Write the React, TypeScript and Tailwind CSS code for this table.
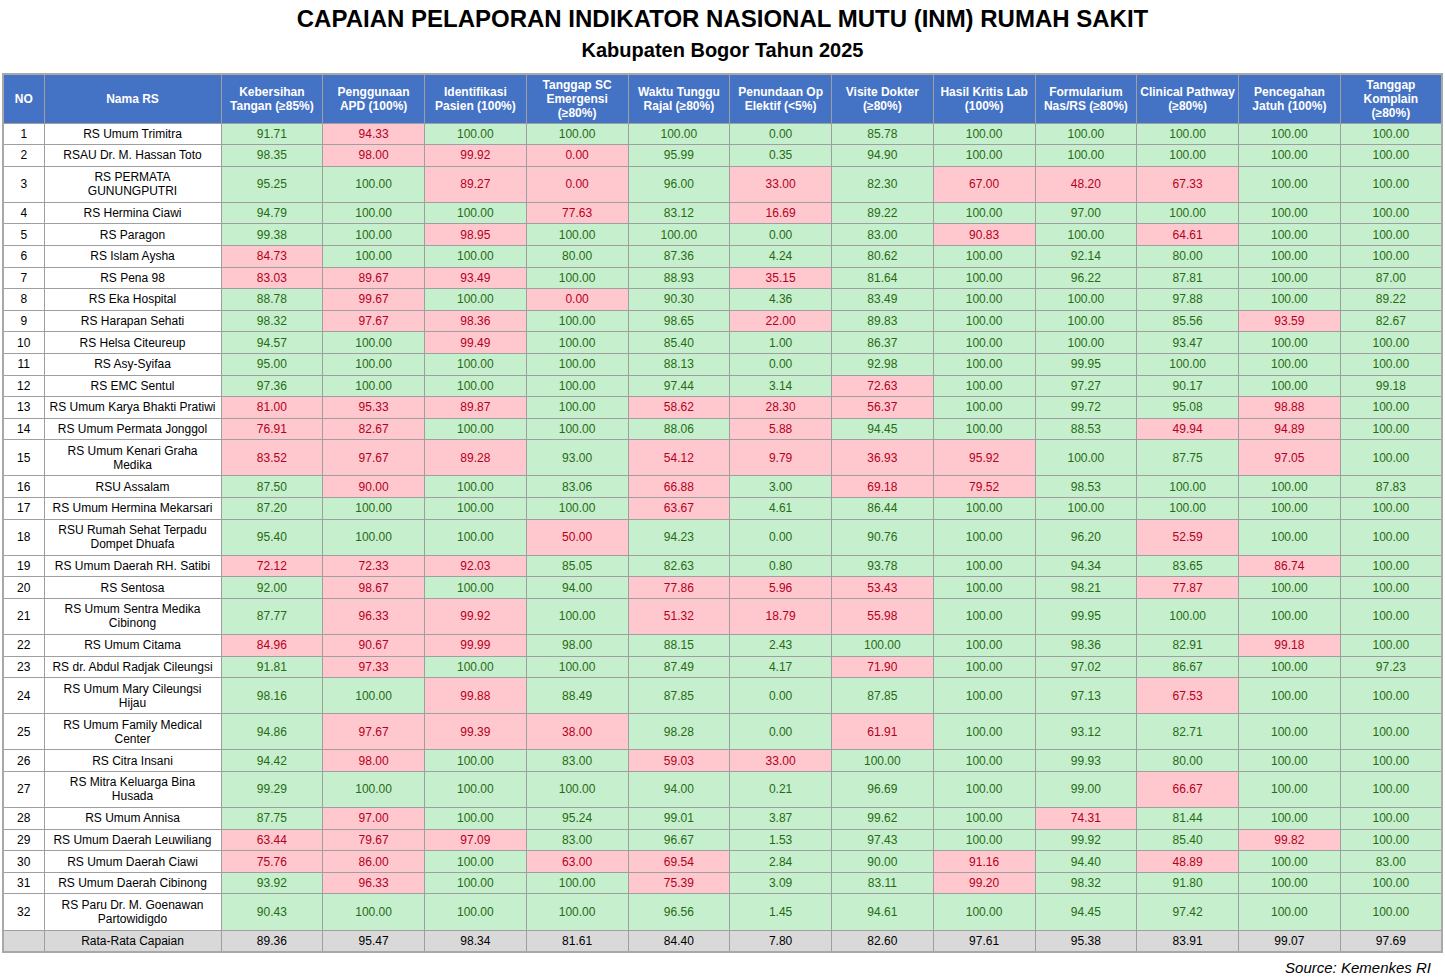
import React from "react";

type Row = { no: number; name: string[]; v: number[] };

const rows: Row[] = [
  { no: 1, name: ["RS Umum Trimitra"], v: [91.71, 94.33, 100, 100, 100, 0, 85.78, 100, 100, 100, 100, 100] },
  { no: 2, name: ["RSAU Dr. M. Hassan Toto"], v: [98.35, 98.0, 99.92, 0, 95.99, 0.35, 94.9, 100, 100, 100, 100, 100] },
  { no: 3, name: ["RS PERMATA", "GUNUNGPUTRI"], v: [95.25, 100, 89.27, 0, 96.0, 33.0, 82.3, 67.0, 48.2, 67.33, 100, 100] },
  { no: 4, name: ["RS Hermina Ciawi"], v: [94.79, 100, 100, 77.63, 83.12, 16.69, 89.22, 100, 97.0, 100, 100, 100] },
  { no: 5, name: ["RS Paragon"], v: [99.38, 100, 98.95, 100, 100, 0, 83.0, 90.83, 100, 64.61, 100, 100] },
  { no: 6, name: ["RS Islam Aysha"], v: [84.73, 100, 100, 80.0, 87.36, 4.24, 80.62, 100, 92.14, 80.0, 100, 100] },
  { no: 7, name: ["RS Pena 98"], v: [83.03, 89.67, 93.49, 100, 88.93, 35.15, 81.64, 100, 96.22, 87.81, 100, 87.0] },
  { no: 8, name: ["RS Eka Hospital"], v: [88.78, 99.67, 100, 0, 90.3, 4.36, 83.49, 100, 100, 97.88, 100, 89.22] },
  { no: 9, name: ["RS Harapan Sehati"], v: [98.32, 97.67, 98.36, 100, 98.65, 22.0, 89.83, 100, 100, 85.56, 93.59, 82.67] },
  { no: 10, name: ["RS Helsa Citeureup"], v: [94.57, 100, 99.49, 100, 85.4, 1.0, 86.37, 100, 100, 93.47, 100, 100] },
  { no: 11, name: ["RS Asy-Syifaa"], v: [95.0, 100, 100, 100, 88.13, 0, 92.98, 100, 99.95, 100, 100, 100] },
  { no: 12, name: ["RS EMC Sentul"], v: [97.36, 100, 100, 100, 97.44, 3.14, 72.63, 100, 97.27, 90.17, 100, 99.18] },
  { no: 13, name: ["RS Umum Karya Bhakti Pratiwi"], v: [81.0, 95.33, 89.87, 100, 58.62, 28.3, 56.37, 100, 99.72, 95.08, 98.88, 100] },
  { no: 14, name: ["RS Umum Permata Jonggol"], v: [76.91, 82.67, 100, 100, 88.06, 5.88, 94.45, 100, 88.53, 49.94, 94.89, 100] },
  { no: 15, name: ["RS Umum Kenari Graha", "Medika"], v: [83.52, 97.67, 89.28, 93.0, 54.12, 9.79, 36.93, 95.92, 100, 87.75, 97.05, 100] },
  { no: 16, name: ["RSU Assalam"], v: [87.5, 90.0, 100, 83.06, 66.88, 3.0, 69.18, 79.52, 98.53, 100, 100, 87.83] },
  { no: 17, name: ["RS Umum Hermina Mekarsari"], v: [87.2, 100, 100, 100, 63.67, 4.61, 86.44, 100, 100, 100, 100, 100] },
  { no: 18, name: ["RSU Rumah Sehat Terpadu", "Dompet Dhuafa"], v: [95.4, 100, 100, 50.0, 94.23, 0, 90.76, 100, 96.2, 52.59, 100, 100] },
  { no: 19, name: ["RS Umum Daerah RH. Satibi"], v: [72.12, 72.33, 92.03, 85.05, 82.63, 0.8, 93.78, 100, 94.34, 83.65, 86.74, 100] },
  { no: 20, name: ["RS Sentosa"], v: [92.0, 98.67, 100, 94.0, 77.86, 5.96, 53.43, 100, 98.21, 77.87, 100, 100] },
  { no: 21, name: ["RS Umum Sentra Medika", "Cibinong"], v: [87.77, 96.33, 99.92, 100, 51.32, 18.79, 55.98, 100, 99.95, 100, 100, 100] },
  { no: 22, name: ["RS Umum Citama"], v: [84.96, 90.67, 99.99, 98.0, 88.15, 2.43, 100, 100, 98.36, 82.91, 99.18, 100] },
  { no: 23, name: ["RS dr. Abdul Radjak Cileungsi"], v: [91.81, 97.33, 100, 100, 87.49, 4.17, 71.9, 100, 97.02, 86.67, 100, 97.23] },
  { no: 24, name: ["RS Umum Mary Cileungsi", "Hijau"], v: [98.16, 100, 99.88, 88.49, 87.85, 0, 87.85, 100, 97.13, 67.53, 100, 100] },
  { no: 25, name: ["RS Umum Family Medical", "Center"], v: [94.86, 97.67, 99.39, 38.0, 98.28, 0, 61.91, 100, 93.12, 82.71, 100, 100] },
  { no: 26, name: ["RS Citra Insani"], v: [94.42, 98.0, 100, 83.0, 59.03, 33.0, 100, 100, 99.93, 80.0, 100, 100] },
  { no: 27, name: ["RS Mitra Keluarga Bina", "Husada"], v: [99.29, 100, 100, 100, 94.0, 0.21, 96.69, 100, 99.0, 66.67, 100, 100] },
  { no: 28, name: ["RS Umum Annisa"], v: [87.75, 97.0, 100, 95.24, 99.01, 3.87, 99.62, 100, 74.31, 81.44, 100, 100] },
  { no: 29, name: ["RS Umum Daerah Leuwiliang"], v: [63.44, 79.67, 97.09, 83.0, 96.67, 1.53, 97.43, 100, 99.92, 85.4, 99.82, 100] },
  { no: 30, name: ["RS Umum Daerah Ciawi"], v: [75.76, 86.0, 100, 63.0, 69.54, 2.84, 90.0, 91.16, 94.4, 48.89, 100, 83.0] },
  { no: 31, name: ["RS Umum Daerah Cibinong"], v: [93.92, 96.33, 100, 100, 75.39, 3.09, 83.11, 99.2, 98.32, 91.8, 100, 100] },
  { no: 32, name: ["RS Paru Dr. M. Goenawan", "Partowidigdo"], v: [90.43, 100, 100, 100, 96.56, 1.45, 94.61, 100, 94.45, 97.42, 100, 100] },
];

const avg = [89.36, 95.47, 98.34, 81.61, 84.4, 7.8, 82.6, 97.61, 95.38, 83.91, 99.07, 97.69];

const headers: string[][] = [
  ["Kebersihan", "Tangan (≥85%)"],
  ["Penggunaan", "APD (100%)"],
  ["Identifikasi", "Pasien (100%)"],
  ["Tanggap SC", "Emergensi", "(≥80%)"],
  ["Waktu Tunggu", "Rajal (≥80%)"],
  ["Penundaan Op", "Elektif (<5%)"],
  ["Visite Dokter", "(≥80%)"],
  ["Hasil Kritis Lab", "(100%)"],
  ["Formularium", "Nas/RS (≥80%)"],
  ["Clinical Pathway", "(≥80%)"],
  ["Pencegahan", "Jatuh (100%)"],
  ["Tanggap", "Komplain", "(≥80%)"],
];

const thresholds: { t: number; lt?: boolean }[] = [
  { t: 85 },
  { t: 100 },
  { t: 100 },
  { t: 80 },
  { t: 80 },
  { t: 5, lt: true },
  { t: 80 },
  { t: 100 },
  { t: 80 },
  { t: 80 },
  { t: 100 },
  { t: 80 },
];

function good(i: number, v: number) {
  const th = thresholds[i];
  return th.lt ? v < th.t : v >= th.t;
}

const bd = "border border-[#9f9f9f]";

export default function App() {
  return (
    <div
      className="w-[1445px] h-[977px] bg-white flex flex-col items-stretch overflow-hidden"
      style={{ fontFamily: '"Liberation Sans", Arial, sans-serif' }}
    >
      <div className="mt-[5px] h-[28px] leading-[28px] text-center text-[24px] font-bold text-black">
        CAPAIAN PELAPORAN INDIKATOR NASIONAL MUTU (INM) RUMAH SAKIT
      </div>
      <div className="mt-[5px] h-[24px] leading-[24px] text-center text-[20px] font-bold text-black">
        Kabupaten Bogor Tahun 2025
      </div>
      <div className="mt-[11px] pl-[2px]">
        <table className="border-collapse table-fixed w-[1439px] border-2 border-[#a8a8a8] text-[12px] text-black">
          <colgroup>
            <col className="w-[41px]" />
            <col className="w-[177px]" />
            {headers.map((_, i) => (
              <col key={i} className="w-[101.75px]" />
            ))}
          </colgroup>
          <thead>
            <tr className="h-[49px] bg-[#4472c4] text-white font-bold">
              <th className={`${bd} p-0 text-center align-middle leading-[14px]`}>NO</th>
              <th className={`${bd} p-0 text-center align-middle leading-[14px]`}>Nama RS</th>
              {headers.map((h, i) => (
                <th key={i} className={`${bd} p-0 text-center align-middle leading-[14px] whitespace-nowrap`}>
                  {h.map((l, j) => (
                    <div key={j}>{l}</div>
                  ))}
                </th>
              ))}
            </tr>
          </thead>
          <tbody>
            {rows.map((r) => {
              const dbl = r.name.length > 1;
              return (
                <tr key={r.no} className={dbl ? "h-[36.1px]" : "h-[21.6px]"}>
                  <td className={`${bd} p-0 text-center align-middle leading-[14px]`}>{r.no}</td>
                  <td className={`${bd} p-0 text-center align-middle leading-[14px] whitespace-nowrap`}>
                    {r.name.map((l, j) => (
                      <div key={j}>{l}</div>
                    ))}
                  </td>
                  {r.v.map((v, i) => {
                    const g = good(i, v);
                    return (
                      <td
                        key={i}
                        className={`${bd} p-0 text-center align-middle leading-[14px] ${
                          g ? "bg-[#c6efce] text-[#266b12]" : "bg-[#ffc7ce] text-[#b3001c]"
                        }`}
                      >
                        {v.toFixed(2)}
                      </td>
                    );
                  })}
                </tr>
              );
            })}
            <tr className="h-[21.6px] bg-[#d9d9d9]">
              <td className={`${bd} p-0`}></td>
              <td className={`${bd} p-0 text-center align-middle leading-[14px]`}>Rata-Rata Capaian</td>
              {avg.map((v, i) => (
                <td key={i} className={`${bd} p-0 text-center align-middle leading-[14px]`}>
                  {v.toFixed(2)}
                </td>
              ))}
            </tr>
          </tbody>
        </table>
      </div>
      <div className="mt-[6px] h-[18px] leading-[18px] text-right pr-[14px] text-[15px] italic text-black">
        Source: Kemenkes RI
      </div>
      <div className="border-b border-[#bdbdbd]" />
    </div>
  );
}
